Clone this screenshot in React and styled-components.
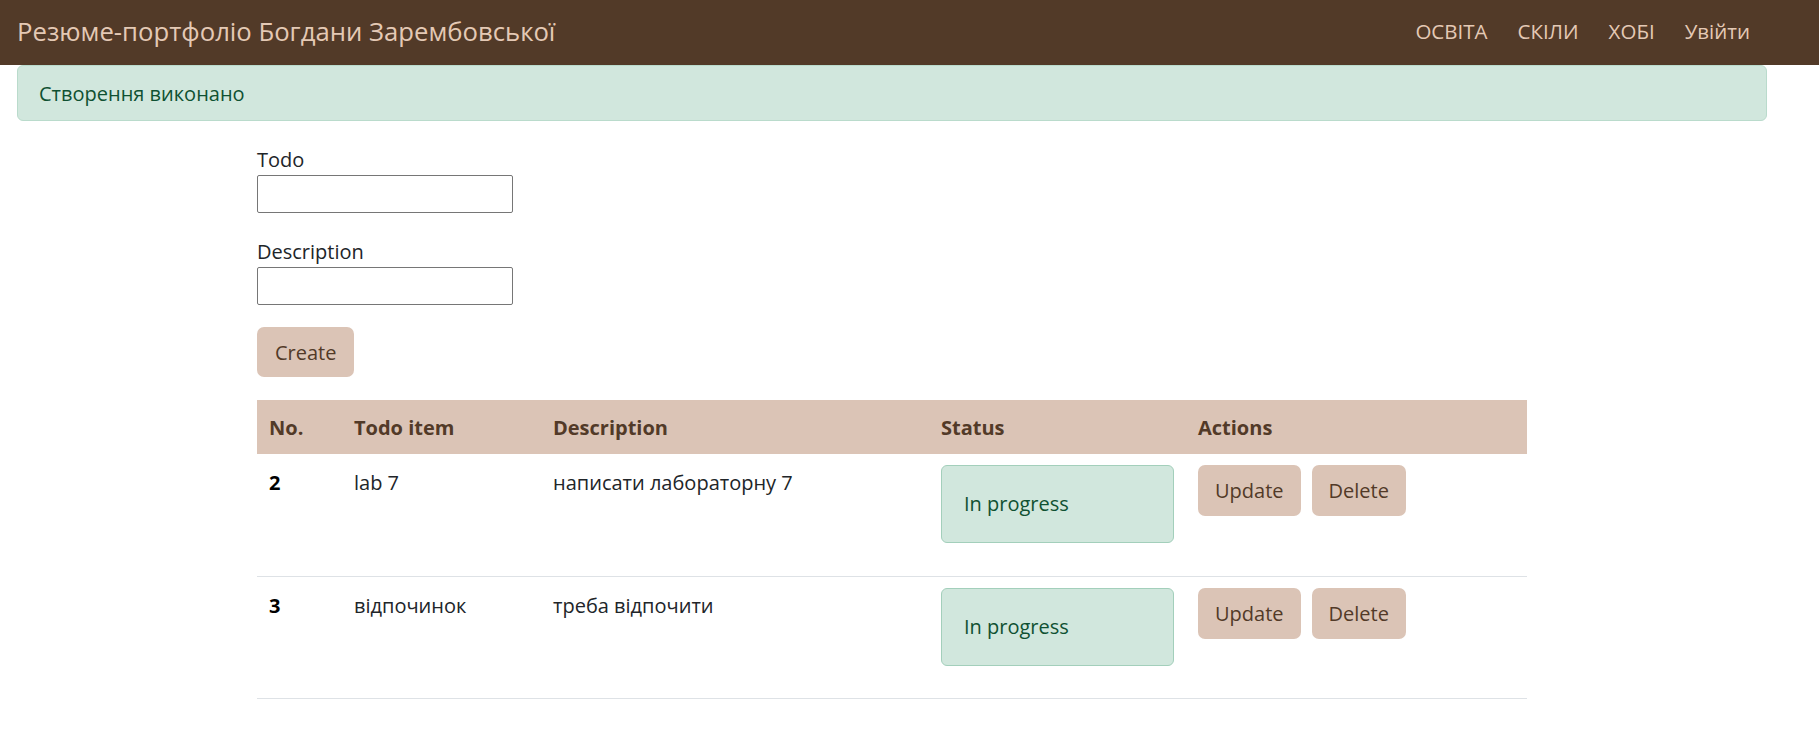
import React from 'react';
import styled, { createGlobalStyle } from 'styled-components';

const GlobalStyle = createGlobalStyle`
  body {
    margin: 0;
    background: #fff;
    font-family: "Open Sans", "Noto Sans", sans-serif;
    color: #212529;
  }
`;

const todos = [
  { id: 2, title: 'lab 7', description: 'написати лабораторну 7', status: 'In progress' },
  { id: 3, title: 'відпочинок', description: 'треба відпочити', status: 'In progress' },
];

const App = () => {
  return (
    <>
      <GlobalStyle />
      <Navbar>
        <Brand>Резюме-портфоліо Богдани Зарембовської</Brand>
        <NavLinks>
          <NavLink>ОСВІТА</NavLink>
          <NavLink>СКІЛИ</NavLink>
          <NavLink>ХОБІ</NavLink>
          <NavLink>Увійти</NavLink>
        </NavLinks>
      </Navbar>
      <Alert>Створення виконано</Alert>
      <Content>
        <Form>
          <Field>
            <Label>Todo</Label>
            <Input type="text" />
          </Field>
          <Field>
            <Label>Description</Label>
            <Input type="text" />
          </Field>
          <Button>Create</Button>
        </Form>
        <Table>
          <thead>
            <tr>
              <Th $w={85}>No.</Th>
              <Th $w={199}>Todo item</Th>
              <Th $w={388}>Description</Th>
              <Th $w={251}>Status</Th>
              <Th>Actions</Th>
            </tr>
          </thead>
          <tbody>
            {todos.map((t) => (
              <tr key={t.id}>
                <Td $text $bold>{t.id}</Td>
                <Td $text>{t.title}</Td>
                <Td $text>{t.description}</Td>
                <Td>
                  <StatusBox>{t.status}</StatusBox>
                </Td>
                <Td>
                  <Actions>
                    <Button $small>Update</Button>
                    <Button $small>Delete</Button>
                  </Actions>
                </Td>
              </tr>
            ))}
          </tbody>
        </Table>
      </Content>
    </>
  );
};

const Navbar = styled.nav`
  height: 65px;
  background: #523a28;
  display: flex;
  align-items: center;
  justify-content: space-between;
  padding: 0 69px 0 17px;
`;

const Brand = styled.span`
  color: #e4c9b5;
  font-size: 25.7px;
  padding-bottom: 3px;
`;

const NavLinks = styled.div`
  display: flex;
  gap: 30px;
`;

const NavLink = styled.a`
  color: #e4c9b5;
  font-size: 20.5px;
  padding-bottom: 3px;
  cursor: pointer;
`;

const Alert = styled.div`
  height: 56px;
  box-sizing: border-box;
  margin: 0 52px 0 17px;
  padding: 0 21px;
  display: flex;
  align-items: center;
  background: #d1e7dd;
  border: 1px solid #badbcc;
  border-radius: 6px;
  color: #0f5132;
  font-size: 20px;
`;

const Content = styled.div`
  margin-left: 257px;
  width: 1270px;
  padding-top: 24px;
`;

const Form = styled.div`
  display: flex;
  flex-direction: column;
  align-items: flex-start;
  margin-bottom: 23px;
`;

const Field = styled.div`
  display: flex;
  flex-direction: column;
  margin-bottom: 24px;

  & + button {
    margin-top: -2px;
  }
`;

const Label = styled.label`
  font-size: 20px;
  line-height: 30px;
`;

const Input = styled.input`
  width: 256px;
  height: 38px;
  margin: 0;
  box-sizing: border-box;
  border: 1px solid #767676;
  border-radius: 2px;
  font-size: 18px;
`;

const Button = styled.button`
  box-sizing: border-box;
  height: ${(p) => (p.$small ? '51px' : '50px')};
  padding: ${(p) => (p.$small ? '0 17px' : '0 18px')};
  border: none;
  border-radius: 7px;
  background: #dbc4b6;
  color: #523a28;
  font-family: inherit;
  font-size: 20px;
  cursor: pointer;
`;

const Table = styled.table`
  width: 1270px;
  border-collapse: collapse;
  font-size: 20px;
`;

const Th = styled.th`
  width: ${(p) => (p.$w ? `${p.$w}px` : 'auto')};
  height: 54px;
  padding: 0 12px;
  background: #dbc4b6;
  color: #523a28;
  text-align: left;
  font-weight: 700;
  box-sizing: border-box;
`;

const Td = styled.td`
  height: 122px;
  box-sizing: border-box;
  padding: ${(p) => (p.$text ? '14px 12px 11px' : '11px 12px')};
  vertical-align: top;
  border-bottom: 1px solid #dee2e6;
  line-height: 30px;
  font-weight: ${(p) => (p.$bold ? 700 : 400)};
  color: ${(p) => (p.$bold ? '#000' : '#212529')};
`;

const StatusBox = styled.div`
  width: 233px;
  height: 78px;
  box-sizing: border-box;
  padding: 0 22px;
  display: flex;
  align-items: center;
  background: #d1e7dd;
  border: 1px solid #a3cfbb;
  border-radius: 6px;
  color: #0f5132;
`;

const Actions = styled.div`
  display: flex;
  gap: 11px;
`;

export default App;
